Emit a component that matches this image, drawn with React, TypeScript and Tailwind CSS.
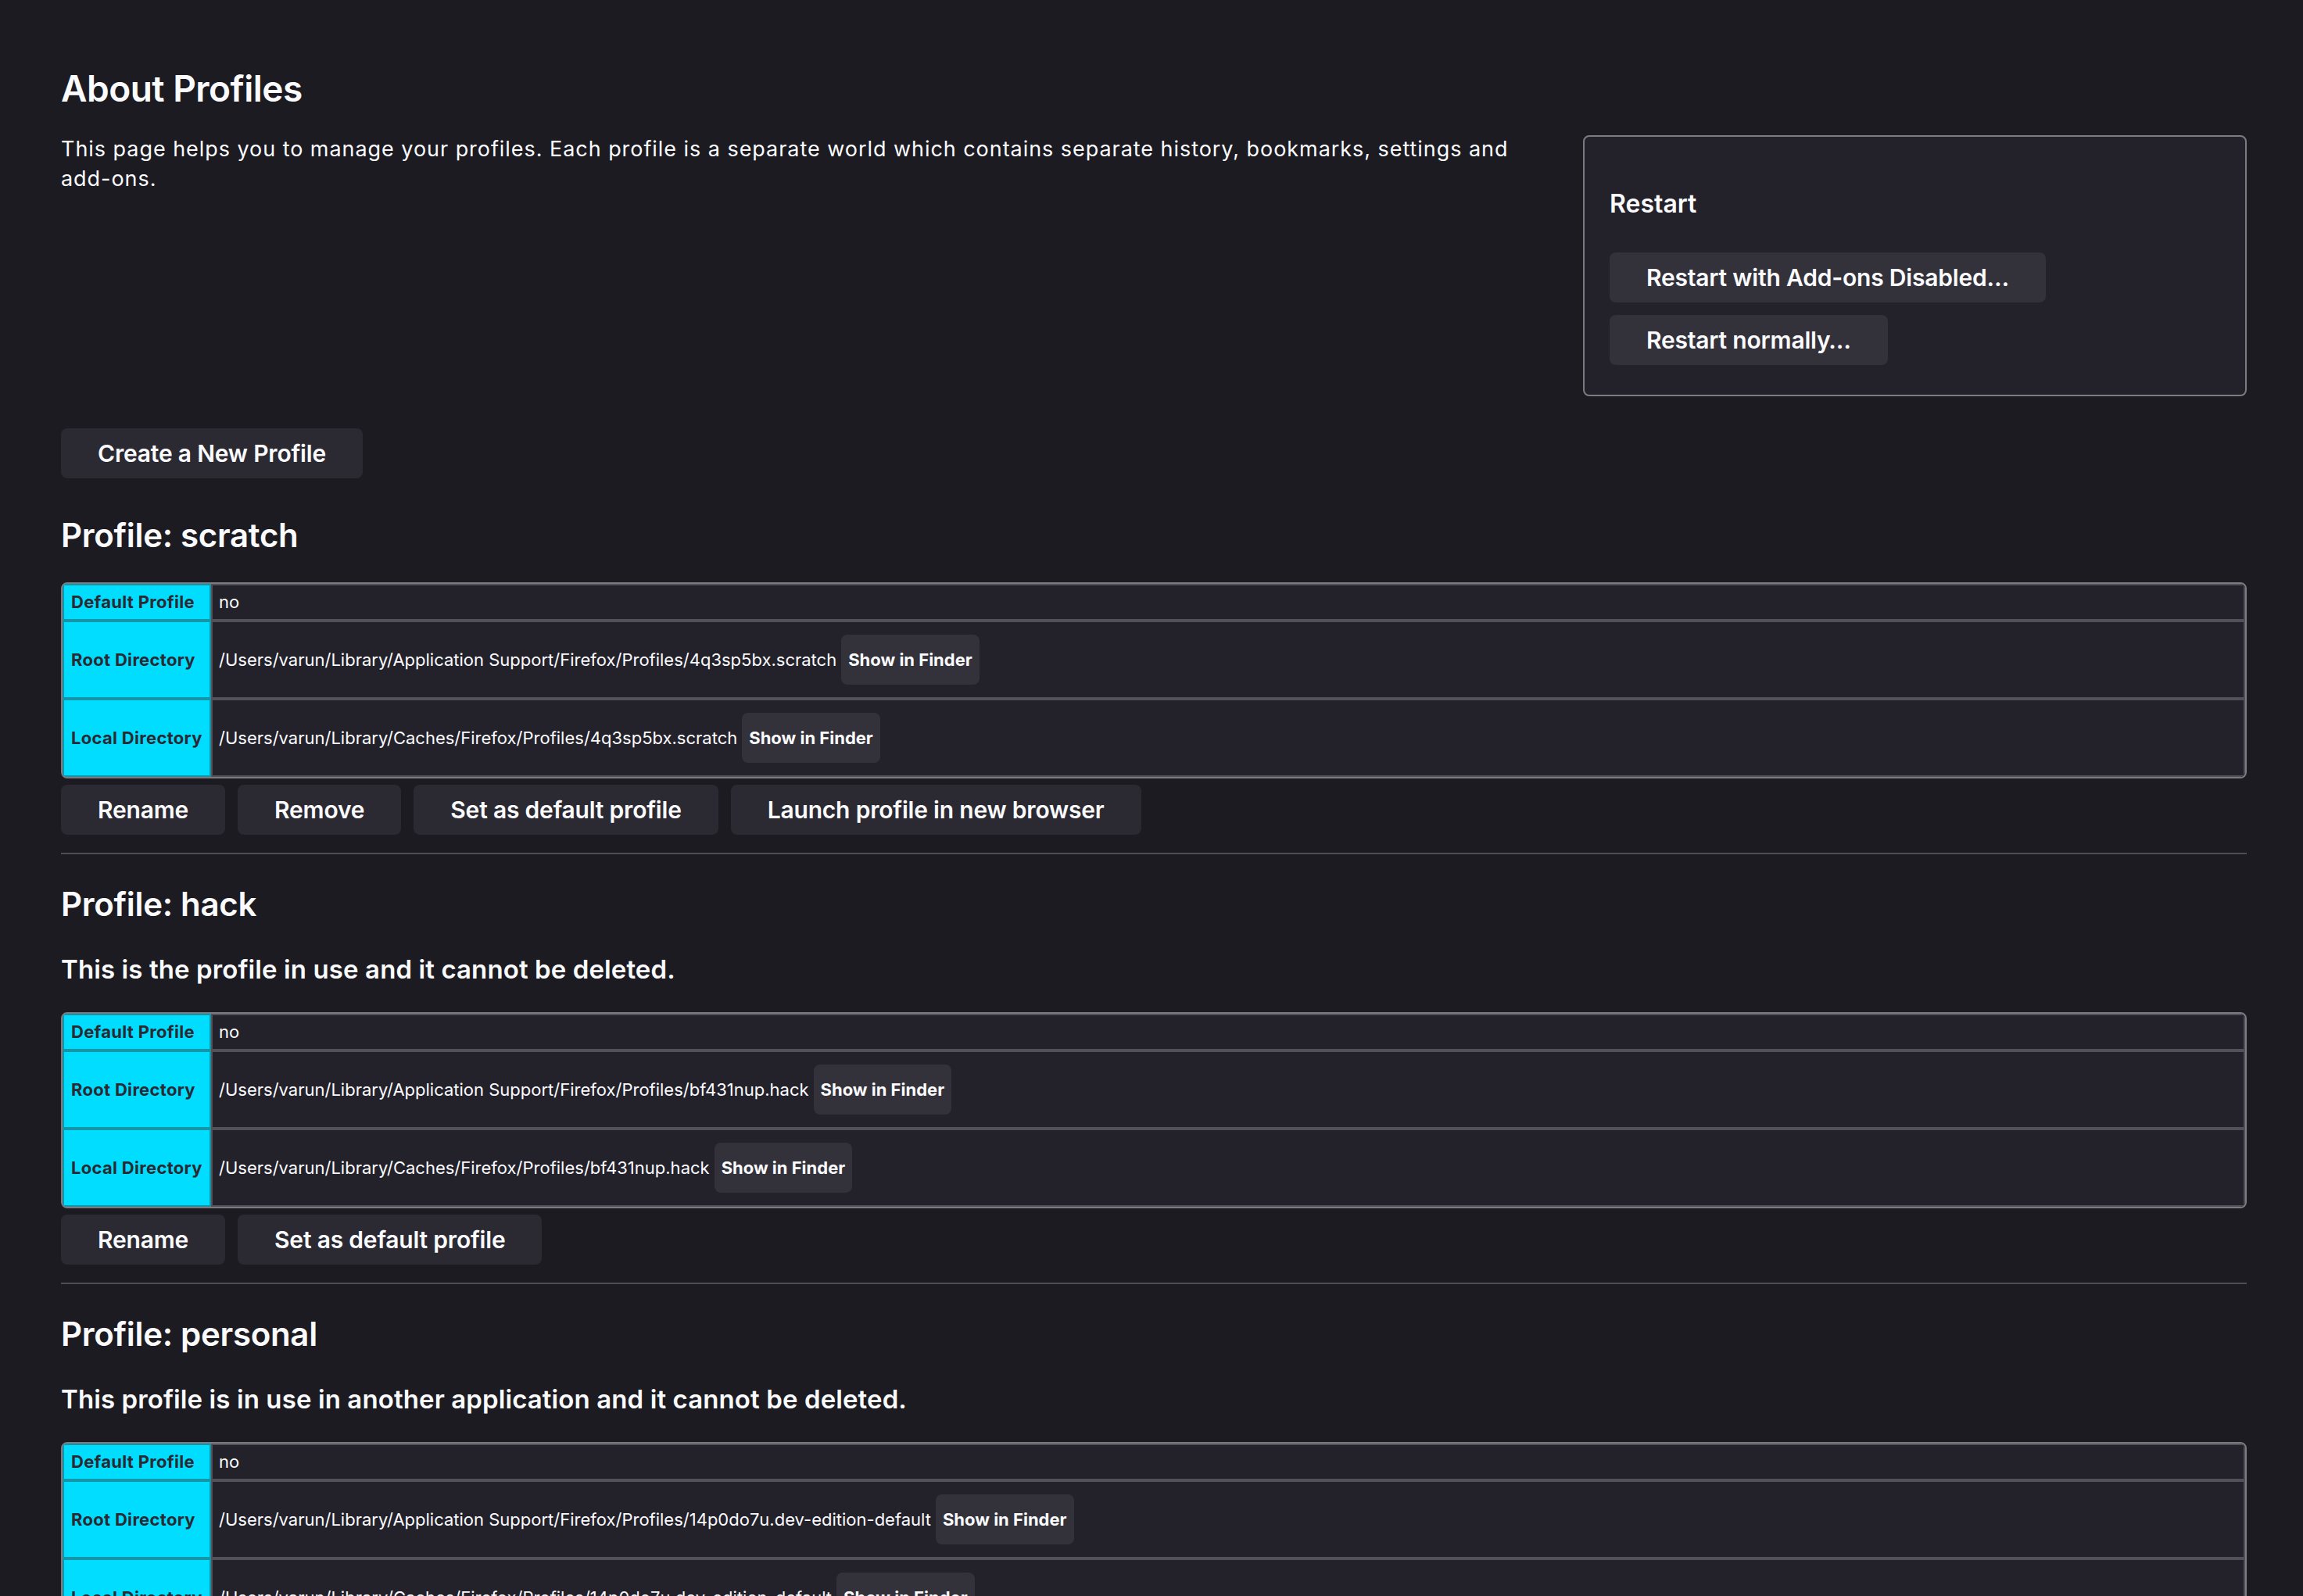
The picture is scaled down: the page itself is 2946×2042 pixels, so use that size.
const profiles = [
  {
    name: 'scratch',
    note: '',
    isDefault: 'no',
    rootDir: '/Users/varun/Library/Application Support/Firefox/Profiles/4q3sp5bx.scratch',
    localDir: '/Users/varun/Library/Caches/Firefox/Profiles/4q3sp5bx.scratch',
    actions: ['Rename', 'Remove', 'Set as default profile', 'Launch profile in new browser']
  },
  {
    name: 'hack',
    note: 'This is the profile in use and it cannot be deleted.',
    isDefault: 'no',
    rootDir: '/Users/varun/Library/Application Support/Firefox/Profiles/bf431nup.hack',
    localDir: '/Users/varun/Library/Caches/Firefox/Profiles/bf431nup.hack',
    actions: ['Rename', 'Set as default profile']
  },
  {
    name: 'personal',
    note: 'This profile is in use in another application and it cannot be deleted.',
    isDefault: 'no',
    rootDir: '/Users/varun/Library/Application Support/Firefox/Profiles/14p0do7u.dev-edition-default',
    localDir: '/Users/varun/Library/Caches/Firefox/Profiles/14p0do7u.dev-edition-default',
    actions: ['Rename', 'Set as default profile']
  }
];

const PageButton = ({ label, onBox = false }: { label: string; onBox?: boolean }) => (
  <button
    className={
      onBox
        ? 'h-[64px] px-[47px] rounded-[8px] bg-[#33323b] text-[30px] font-semibold leading-[36px] tracking-[-0.2px] text-[#fbfbfe] whitespace-nowrap'
        : 'h-[64px] px-[47px] rounded-[8px] bg-[#2b2a33] text-[30px] font-semibold leading-[36px] tracking-[-0.2px] text-[#fbfbfe] whitespace-nowrap'
    }
  >
    {label}
  </button>
);

const InfoRow = ({ label, value, finder = false }: { label: string; value: string; finder?: boolean }) => (
  <div className="flex items-stretch">
    <div className="w-[190px] shrink-0 flex items-center border-2 border-[#1495a8] bg-[#00ddff] px-[9px] text-[22px] font-bold leading-[27px] tracking-[0.3px] text-[#2b2a33] whitespace-nowrap">
      {label}
    </div>
    <div className="flex-1 flex items-center border-2 border-[#52515a] bg-[#23222b] px-[8px] py-[8px] text-[22px] leading-[27px] whitespace-nowrap">
      <span>{value}</span>
      {finder && (
        <button className="ml-[6px] my-[8px] h-[64px] px-[9px] rounded-[8px] bg-[#33323b] text-[22px] font-bold leading-[27px] text-[#fbfbfe]">
          Show in Finder
        </button>
      )}
    </div>
  </div>
);

export default function App() {
  return (
    <div className="min-h-screen bg-[#1c1b22] text-[#fbfbfe] font-['Inter',sans-serif] pl-[78px] pr-[72px] pt-[85px] pb-[80px]">
      {/* Intro + restart box */}
      <div className="flex items-start gap-[64px]">
        <div className="flex-1">
          <h1 className="text-[46px] leading-[56px] font-semibold tracking-[-0.5px]">About Profiles</h1>
          <p className="mt-[31px] text-[27px] leading-[38px] tracking-[0.95px]">
            This page helps you to manage your profiles. Each profile is a separate world which contains separate
            history, bookmarks, settings and add-ons.
          </p>
        </div>

        <div className="mt-[88px] w-[849px] shrink-0 rounded-[8px] border-2 border-[#7c7b82] bg-[#23222b] px-[32px] pt-[66px] pb-[38px]">
          <h2 className="text-[32px] leading-[40px] font-semibold">Restart</h2>
          <div className="mt-[42px] flex flex-col items-start gap-[16px]">
            <PageButton label="Restart with Add-ons Disabled…" onBox />
            <PageButton label="Restart normally…" onBox />
          </div>
        </div>
      </div>

      <div className="mt-[41px]">
        <PageButton label="Create a New Profile" />
      </div>

      {/* Profiles */}
      {profiles.map((profile) => (
        <section key={profile.name}>
          <h2
            className={
              profile.name === 'scratch'
                ? 'mt-[49px] text-[42px] leading-[48px] font-semibold tracking-[-0.3px]'
                : 'mt-[40px] text-[42px] leading-[48px] font-semibold tracking-[-0.3px]'
            }
          >
            Profile: {profile.name}
          </h2>
          {profile.note && (
            <h3 className="mt-[39px] text-[33px] leading-[40px] font-semibold tracking-[0.1px]">{profile.note}</h3>
          )}

          <div className={profile.note ? 'mt-[35px]' : 'mt-[36px]'}>
            <div className="rounded-[8px] border-2 border-[#7c7b82] overflow-hidden">
              <InfoRow label="Default Profile" value={profile.isDefault} />
              <InfoRow label="Root Directory" value={profile.rootDir} finder />
              <InfoRow label="Local Directory" value={profile.localDir} finder />
            </div>
          </div>

          <div className="mt-[8px] flex gap-[16px]">
            {profile.actions.map((action) => (
              <PageButton key={action} label={action} />
            ))}
          </div>

          <hr className="mt-[23px] border-t-2 border-[#4e4d55]" />
        </section>
      ))}
    </div>
  );
}
